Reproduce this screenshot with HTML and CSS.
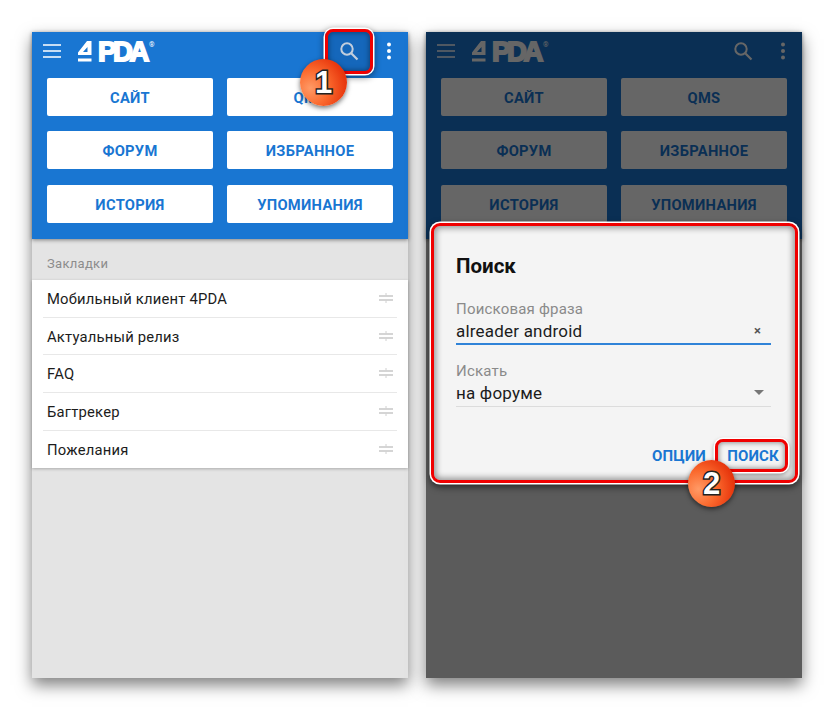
FILE: index.html
```html
<!DOCTYPE html>
<html lang="ru">
<head>
<meta charset="utf-8">
<title>4PDA</title>
<link rel="stylesheet" href="styles.css">
</head>
<body>
<main class="stage">
  <section class="phone">
    <header class="top">
      <div class="toolbar">
        <svg class="menu" width="18" height="14" viewBox="0 0 18 14"><path d="M0 1h18M0 7h18M0 13h18" stroke="#fff" stroke-width="1.7"/></svg>
        <div class="logo">
          <svg class="logo-mark" width="14" height="21" viewBox="0 0 14 21"><path d="M0 11.500 9 0h4.500v14H0zM5 11h4.500V6zM0 17.500h13.500V20.500H0z" fill="#fff" fill-rule="evenodd"/></svg>
          <span class="logo-text">PDA</span><span class="logo-reg">®</span>
        </div>
        <svg class="search" width="20" height="20" viewBox="0 0 20 20"><circle cx="8" cy="8" r="5.700" fill="none" stroke="#fff" stroke-width="2"/><path d="M12.200 12.200 18.500 18.500" stroke="#fff" stroke-width="2.200"/></svg>
        <svg class="kebab" width="6" height="18" viewBox="0 0 6 18"><circle cx="3" cy="2.500" r="2" fill="#fff"/><circle cx="3" cy="9" r="2" fill="#fff"/><circle cx="3" cy="15.500" r="2" fill="#fff"/></svg>
      </div>
      <div class="buttons">
        <a class="btn">САЙТ</a><a class="btn">QMS</a>
        <a class="btn">ФОРУМ</a><a class="btn">ИЗБРАННОЕ</a>
        <a class="btn">ИСТОРИЯ</a><a class="btn">УПОМИНАНИЯ</a>
      </div>
    </header>
    <div class="section-label">Закладки</div>
    <ul class="list">
      <li class="row"><span>Мобильный клиент 4PDA</span><svg class="grip" width="14" height="12" viewBox="0 0 14 12"><path d="M0 4h14M0 8h14" stroke="#c8c8c8" stroke-width="1.500"/><path d="M7 1v2.500M7 8.500V11" stroke="#d0d0d0" stroke-width="1"/></svg></li>
      <li class="row"><span>Актуальный релиз</span><svg class="grip" width="14" height="12" viewBox="0 0 14 12"><path d="M0 4h14M0 8h14" stroke="#c8c8c8" stroke-width="1.500"/><path d="M7 1v2.500M7 8.500V11" stroke="#d0d0d0" stroke-width="1"/></svg></li>
      <li class="row"><span>FAQ</span><svg class="grip" width="14" height="12" viewBox="0 0 14 12"><path d="M0 4h14M0 8h14" stroke="#c8c8c8" stroke-width="1.500"/><path d="M7 1v2.500M7 8.500V11" stroke="#d0d0d0" stroke-width="1"/></svg></li>
      <li class="row"><span>Багтрекер</span><svg class="grip" width="14" height="12" viewBox="0 0 14 12"><path d="M0 4h14M0 8h14" stroke="#c8c8c8" stroke-width="1.500"/><path d="M7 1v2.500M7 8.500V11" stroke="#d0d0d0" stroke-width="1"/></svg></li>
      <li class="row"><span>Пожелания</span><svg class="grip" width="14" height="12" viewBox="0 0 14 12"><path d="M0 4h14M0 8h14" stroke="#c8c8c8" stroke-width="1.500"/><path d="M7 1v2.500M7 8.500V11" stroke="#d0d0d0" stroke-width="1"/></svg></li>
    </ul>
    <div class="mark mark-search"></div>
    <div class="badge badge-one">1</div>
  </section>

  <section class="phone">
    <header class="top">
      <div class="toolbar">
        <svg class="menu" width="18" height="14" viewBox="0 0 18 14"><path d="M0 1h18M0 7h18M0 13h18" stroke="#fff" stroke-width="1.7"/></svg>
        <div class="logo">
          <svg class="logo-mark" width="14" height="21" viewBox="0 0 14 21"><path d="M0 11.500 9 0h4.500v14H0zM5 11h4.500V6zM0 17.500h13.500V20.500H0z" fill="#fff" fill-rule="evenodd"/></svg>
          <span class="logo-text">PDA</span><span class="logo-reg">®</span>
        </div>
        <svg class="search" width="20" height="20" viewBox="0 0 20 20"><circle cx="8" cy="8" r="5.700" fill="none" stroke="#fff" stroke-width="2"/><path d="M12.200 12.200 18.500 18.500" stroke="#fff" stroke-width="2.200"/></svg>
        <svg class="kebab" width="6" height="18" viewBox="0 0 6 18"><circle cx="3" cy="2.500" r="2" fill="#fff"/><circle cx="3" cy="9" r="2" fill="#fff"/><circle cx="3" cy="15.500" r="2" fill="#fff"/></svg>
      </div>
      <div class="buttons">
        <a class="btn">САЙТ</a><a class="btn">QMS</a>
        <a class="btn">ФОРУМ</a><a class="btn">ИЗБРАННОЕ</a>
        <a class="btn">ИСТОРИЯ</a><a class="btn">УПОМИНАНИЯ</a>
      </div>
    </header>
    <div class="scrim"></div>
    <div class="dialog">
      <h2 class="dialog-title">Поиск</h2>
      <div class="field-label">Поисковая фраза</div>
      <div class="field field-active"><span>alreader android</span><span class="clear">×</span></div>
      <div class="field-label field-label-second">Искать</div>
      <div class="field field-select"><span>на форуме</span><i class="caret"></i></div>
      <div class="actions">
        <a class="action">ОПЦИИ</a>
        <a class="action action-main">ПОИСК</a>
      </div>
    </div>
    <div class="badge badge-two">2</div>
  </section>
</main>
</body>
</html>
```
FILE: styles.css
```css
* { box-sizing: border-box; }
html, body { margin: 0; padding: 0; background: #fff; }
body { width: 834px; height: 710px; overflow: hidden; font-family: Roboto, "Liberation Sans", sans-serif; }

.stage { display: flex; gap: 18px; padding: 32px 0 0 32px; }

.phone {
  position: relative;
  width: 376px;
  height: 646px;
  background: #e4e4e4;
  box-shadow: 0 7px 15px rgba(0, 0, 0, .5);
}

.top {
  position: relative;
  height: 207px;
  background: #1976d2;
  box-shadow: 0 1px 4px rgba(0, 0, 0, .45);
}

.toolbar { position: relative; height: 38px; margin-bottom: 8px; display: flex; align-items: center; padding-left: 11px; }
.menu { display: block; }
.logo { display: flex; align-items: center; margin-left: 17px; color: #fff; height: 22px; margin-top: 1px; }
.logo-mark { display: block; flex: none; }
.logo-text {
  margin-left: 6px;
  font-family: "Liberation Sans", sans-serif;
  font-size: 27.500px;
  line-height: 22px;
  font-weight: 700;
  letter-spacing: -3.400px;
  -webkit-text-stroke: 1.800px #fff;
}
.logo-reg { align-self: flex-start; margin-left: 3px; font-size: 7px; line-height: 8px; }
.search { margin-left: auto; margin-right: 27px; display: block; }
.kebab { display: block; margin-right: 16px; }

.buttons { display: grid; grid-template-columns: 166px 166px; gap: 15.300px 14px; padding: 0 15px; }
.btn {
  height: 38px;
  display: flex;
  align-items: center;
  justify-content: center;
  padding-top: 2px;
  background: #fff;
  border-radius: 2px;
  color: #1976d2;
  font-weight: 700;
  font-size: 14.700px;
  letter-spacing: .3px;
}

.section-label { height: 41px; padding: 17px 0 0 15px; color: #8c8c8c; font-size: 13px; line-height: 16px; letter-spacing: .3px; }

.list { list-style: none; margin: 0; padding: 0; background: #fff; box-shadow: 0 1px 3px rgba(0, 0, 0, .25); }
.row {
  height: 37.700px;
  margin: 0 11px;
  padding: 1px 4px 0;
  display: flex;
  align-items: center;
  justify-content: space-between;
  border-bottom: 1px solid #e8e8e8;
  color: #1c1c1c;
  font-size: 14.800px;
  letter-spacing: .2px;
}
.row:last-child { border-bottom: 0; }
.grip { display: block; margin-bottom: 2px; }

.scrim { position: absolute; inset: 0; background: rgba(0, 0, 0, .6); }

.dialog {
  position: absolute;
  left: 5px;
  top: 191px;
  width: 367px;
  height: 260px;
  padding: 28px 24px 0 22px;
  background: #f4f4f4;
  border: 3px solid #f00000;
  border-radius: 9px;
  box-shadow: 0 0 0 1.500px #fff, 0 3px 7px 1px rgba(0, 0, 0, .6), inset 0 0 6px 2px rgba(0, 0, 0, .4);
}
.dialog-title { margin: 0; font-size: 20.500px; line-height: 24px; font-weight: 700; color: #111; }
.field-label { margin-top: 22px; font-size: 15px; line-height: 18px; color: #8a8a8a; letter-spacing: .2px; }
.field-label-second { margin-top: 17px; }
.field {
  display: flex;
  align-items: center;
  justify-content: space-between;
  height: 27px;
  color: #1c1c1c;
  font-size: 17px;
  letter-spacing: .2px;
}
.field-active { border-bottom: 2px solid #3083d8; }
.field-select { border-bottom: 1px solid #dcdcdc; }
.clear { font-size: 13px; font-weight: 700; color: #555; margin-right: 10px; }
.caret { width: 0; height: 0; border: 5px solid transparent; border-top: 5px solid #777; border-bottom: 0; margin-right: 7px; margin-top: -1px; }

.actions { position: absolute; left: 218px; top: 218px; display: flex; gap: 21.500px; }
.action { color: #1976d2; font-weight: 700; font-size: 15px; line-height: 24px; letter-spacing: .1px; }
.action-main { position: relative; }
.action-main::before {
  content: "";
  position: absolute;
  left: -12px;
  top: -5px;
  width: 67px;
  height: 27px;
  border: 3px solid #f00000;
  border-radius: 8px;
  box-shadow: 0 0 0 1.500px #fff, 0 2px 4px 1px rgba(0, 0, 0, .4), inset 0 0 5px 1px rgba(0, 0, 0, .4);
}

.mark { position: absolute; }
.mark-search {
  left: 293px;
  top: -3px;
  width: 48px;
  height: 45px;
  background: rgba(10, 60, 120, .25);
  border: 3px solid #f00000;
  border-radius: 8px;
  box-shadow: 0 0 0 1.500px #fff, 0 2px 6px 2px rgba(0, 0, 0, .4), inset 0 0 5px 1px rgba(0, 0, 0, .35);
}

.badge {
  position: absolute;
  width: 47px;
  height: 47px;
  display: flex;
  align-items: center;
  justify-content: center;
  border-radius: 50%;
  background: radial-gradient(circle at 22% 62%, #ff9a66 0, #fb6a2e 38%, #e8380e 75%, #cf2a05 100%);
  box-shadow: 0 2px 5px rgba(0, 0, 0, .55);
  color: #fff;
  font-family: "Liberation Sans", sans-serif;
  font-size: 31px;
  line-height: 1;
  font-weight: 700;
  -webkit-text-stroke: 3px #222;
  paint-order: stroke fill;
}
.badge-one { left: 268px; top: 27px; }
.badge-two { left: 262px; top: 428px; }
```
